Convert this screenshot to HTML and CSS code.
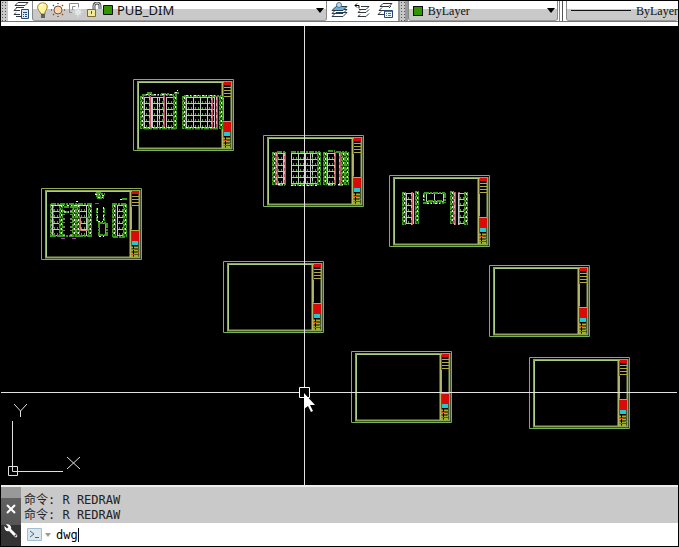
FILE: index.html
```html
<!DOCTYPE html>
<html lang="zh-CN">
<head>
  <meta charset="UTF-8" />
  <meta name="viewport" content="width=device-width, initial-scale=1" />
  <title>CAD</title>
  <link rel="stylesheet" href="styles.css">
</head>
<body>
  <div class="app">

    <!-- TOOLBAR -->
    <header class="toolbar">
      <span class="grip"></span>
      <button class="tool" aria-label="Layer properties">
        <svg width="18" height="18" viewBox="0 0 18 18" fill="none" stroke="#303840">
          <path d="M6 .5h10l-3 3H3zM4 5.500h8M2 8.500l3-3M2 8.500h6M4 10.500l-2 2h6M4 14.500h5" />
          <path d="M9.500 7.500h7v9h-7z" fill="#dce8f5" stroke="#234a7c" />
          <path d="M11 10.500h4M11 12.500h1m1 0h2M11 14.500h1m1 0h2" stroke="#234a7c" />
        </svg>
      </button>

      <div class="combo combo-layer">
        <svg width="80" height="18" viewBox="0 0 80 18" fill="none" aria-hidden="true">
          <!-- bulb -->
          <path d="M3 10C1 8 0 6 1 3.500 3 0 8 0 10 3c1 3-1 5-2 7v2H4z" fill="#fff4a0" stroke="#a47b24" />
          <path d="M4 13h4M4 15h4" stroke="#39424e" stroke-width="1.500" />
          <path d="M3.500 4l2-2" stroke="#fff" stroke-width="1.500" />
          <!-- sun -->
          <circle cx="21" cy="8" r="4" fill="#fbd9ae" stroke="#765741" />
          <path d="M21 1v1M21 14v1M14 8h1M27 8h1M16 3l1 1M25 12l1 1M26 3l-1 1M17 12l-1 1" stroke="#8b4e28" stroke-width="1.500" />
          <!-- viewport freeze -->
          <path d="M32.500 10V1.500h9v4M35.500 8V4.500h3M32 10.500h3" stroke="#8b9097" />
          <g stroke="#e2e3e6"><circle cx="41" cy="10" r="2.500" fill="#eee" /><path d="M41 5v10M36 10h10M38 7l6 6M44 7l-6 6" /></g>
          <!-- padlock -->
          <path d="M57 8V4c0-4 6-4 6 0v3" stroke="#4d565e" stroke-width="3" />
          <path d="M57 8V4c0-4 6-4 6 0v3" stroke="#e9e9df" />
          <path d="M50.500 7.500h8v7h-8z" fill="#f4e89b" stroke="#7b6b2c" />
          <path d="M54.500 9v3" stroke="#665a28" />
          <path d="M66.500 3.500h9v9h-9z" fill="#339600" stroke="#111" />
        </svg>
        <select class="layer-select" aria-label="Layer"><option>PUB_DIM</option></select>
        <svg class="arrow" width="8" height="5" viewBox="0 0 8 5"><path d="M0 0h8L4 5z" /></svg>
      </div>

      <div class="tools">
        <button class="tool" aria-label="Make object's layer current">
          <svg width="18" height="18" viewBox="0 0 18 18" fill="#b7ddf4" stroke="#263d50">
            <path d="M5 10.500h11l-4 4H1zM5 7.500h11l-4 4H1z" fill="#fff" />
            <path d="M5 4.500h11l-4 4H1z" fill="#66b2e1" />
            <circle cx="8" cy="3" r="2.500" stroke="#62788b" />
          </svg>
        </button>
        <button class="tool" aria-label="Previous layer">
          <svg width="18" height="18" viewBox="0 0 18 18" fill="none" stroke="#303840">
            <path d="M1 3.500h4v3M3 1.500l-2 2 2 2" stroke="#000" />
            <path d="M7 4.500h8l-3 3H5M6 8.500l-2 2h8l3-3M6 12.500l-2 2h8l3-3" />
          </svg>
        </button>
        <button class="tool" aria-label="Layer states">
          <svg width="18" height="18" viewBox="0 0 18 18" fill="none" stroke="#303840">
            <path d="M6 1.500h9l-3 3H3zM5 5.500l-3 3h6M12 6l2-2M4 9.500l-3 3h6" />
            <path d="M7.500 8.500h8v7h-8z" fill="#eef5fc" stroke="#234a7c" />
            <path d="M8 9.500h7M9 11.500h1m1 0h3M9 13.500h1m1 0h3" stroke="#4d77a4" />
          </svg>
        </button>
      </div>

      <span class="grip grip-mid"></span>
      <div class="combo combo-color">
        <span class="swatch"></span>
        <select aria-label="Color"><option>ByLayer</option></select>
        <svg class="arrow" width="8" height="5" viewBox="0 0 8 5"><path d="M0 0h8L4 5z" /></svg>
      </div>
      <span class="divider"></span>
      <div class="combo combo-linetype">
        <span class="line-sample"></span>
        <select aria-label="Linetype"><option>ByLayer</option></select>
      </div>
    </header>

    <!-- MODEL SPACE -->
    <main class="model">
      <svg class="drawing" role="img" aria-label="Model space">
        <defs>
          <!-- empty drawing sheet with title block -->
          <g id="sheet" fill="none">
            <path d="M.5.5h100v71H.5z" stroke="#93a851" />
            <path d="M1 71.500h99M100.500 1v70" stroke="#7bb054" />
            <path d="M5 3h93.500v66.500H5z" stroke="#8ba35b" stroke-width="2" />
            <path d="M5.500 3.500h84M5.500 4v65" stroke="#a9cf7f" />
            <path d="M89.500 3v66" stroke="#b5b766" stroke-width="2" />
            <path d="M91 3h7v3h-7zM91 43h7v10h-7z" fill="#d90b08" />
            <path d="M91 8.500h7M91 11.500h7M91 14.500h7M91 17.500h7M90 42.500h8" stroke="#b9ab40" />
            <path d="M90.500 19v22M98.500 19v22" stroke="#77c27b" />
            <path d="M91 53h6v4h-6z" fill="#24c7d3" />
            <path d="M90 59.500h8M90 62.500h8M90 65.500h8M90 68h8" stroke="#a3b02d" stroke-width="2" stroke-dasharray="2 1 4 1" />
            <path d="M91 61.500h3M91 66.500h2M96 64.500h2" stroke="#d84b19" />
          </g>

          <!-- one column of floor plans: green outline with dotted dimensions -->
          <g id="dims" fill="none">
            <path d="M2 0v33" stroke="#1c4d0c" stroke-width="4" />
            <path d="M.5 0v33M3.500 0v33" stroke="#45a024" stroke-dasharray="4 1" />
            <path d="M1.500 0v33" stroke="#4fb52c" stroke-dasharray="2 2" />
            <path d="M2.500 1v32" stroke="#f0fae6" stroke-dasharray="2 3 2 2" />
          </g>
          <g id="rooms" fill="none">
            <path d="M0 1.500h8M0 7.500h8M0 13.500h8M0 19.500h8M0 25.500h8M0 31.500h8" stroke="#c3c0cc" />
            <path d="M.5 1v31M7.500 1v31" stroke="#c9c9cf" />
            <path d="M2.500 5v27M5.500 5v27" stroke="#49a028" stroke-dasharray="2 4" />
          </g>
          <g id="stairs" fill="none">
            <path d="M1 0v33" stroke="#b75561" stroke-width="2" />
            <path d="M.5 1v32" stroke="#e9a9b0" stroke-dasharray="3 3" />
          </g>
        </defs>

        <!-- elevations -->
        <g transform="translate(132 53)">
          <use href="#sheet" x="1" />
          <use href="#dims" x="8" y="17" /><use href="#rooms" x="12" y="17" />
          <use href="#stairs" x="17" y="17" /><use href="#rooms" x="20" y="17" />
          <use href="#rooms" x="25" y="17" /><use href="#stairs" x="31" y="17" />
          <use href="#rooms" x="34" y="17" /><use href="#dims" x="41" y="17" />
          <use href="#dims" x="50" y="17" /><use href="#rooms" x="54" y="17" />
          <use href="#rooms" x="61" y="17" /><use href="#rooms" x="68" y="17" />
          <use href="#rooms" x="75" y="17" /><use href="#stairs" x="79" y="17" />
          <use href="#stairs" x="84" y="17" /><use href="#dims" x="87" y="17" />
          <path class="green" d="M10 16h35M52 17h37M12 49.500h33M54 49.500h33M15 14h5M29 15h8M42 14h6" />
          <path class="white" d="M12 48.500h31M54 48.500h32M43 13.500h3M45 11.500h1M14 15.500h28M54 16.500h30" />
        </g>

        <g transform="translate(263 109)">
          <use href="#sheet" />
          <use href="#dims" x="9" y="17" /><use href="#rooms" x="13" y="17" />
          <use href="#stairs" x="13" y="17" /><use href="#stairs" x="21" y="17" />
          <use href="#rooms" x="28" y="17" /><use href="#rooms" x="35" y="17" />
          <use href="#rooms" x="42" y="17" /><use href="#rooms" x="47" y="17" />
          <use href="#dims" x="54" y="17" />
          <use href="#dims" x="60" y="17" /><use href="#rooms" x="64" y="17" />
          <use href="#stairs" x="71" y="17" /><use href="#stairs" x="76" y="17" />
          <use href="#dims" x="78" y="17" /><use href="#dims" x="82" y="17" />
          <path class="green" d="M14 17h8M28 17h29M65 16h7M73 17h11M28 50h27M15 50h7M65 50h7M75 50h6" />
          <path class="white" d="M15 49.500h7M28 50.500h26M65 49.500h7M75 49.500h6" />
        </g>

        <g transform="translate(41 162)">
          <use href="#sheet" />
          <use href="#dims" x="9" y="16" /><use href="#rooms" x="11" y="16" />
          <use href="#dims" x="18" y="16" /><use href="#dims" x="31" y="16" />
          <use href="#rooms" x="38" y="16" /><use href="#dims" x="35" y="16" />
          <use href="#dims" x="47" y="16" />
          <use href="#dims" x="71" y="16" /><use href="#rooms" x="76" y="16" />
          <use href="#dims" x="82" y="16" />
          <path d="M39.500 29.500h7v13h-7zM58.500 35.500h6v12h-6z" fill="none" stroke="#cf8573" />
          <path class="green" d="M10 16h41M23 19h14M23 24h8M10 48h41M56 20v13M63 20v13M58 35v13M66 35v13M57 35h9M57 47h9M54 6h10M55 8h9M56 10h7M55 5h6M71 16h14M81 11h5M72 49h12" />
          <path class="white" d="M10 17.500h40M23 22v26M30 22v26M23 24h8M56.500 20v13M62.500 19v13M57 33.500h7M58 48.500h6M54 6.500h5M57 9.500h6M61 7.500h3M35 13.500h3M79 11.500h4" />
          <path d="M54 15.500h4M20 50.500h4M31 50.500h4M78 49.500h4" stroke="#a640ac" />
        </g>

        <g transform="translate(389 149)">
          <use href="#sheet" />
          <use href="#dims" x="13" y="17" /><use href="#rooms" x="17" y="17" />
          <use href="#stairs" x="22" y="17" /><use href="#dims" x="26" y="16" />
          <use href="#dims" x="61" y="16" /><use href="#stairs" x="65" y="17" />
          <use href="#stairs" x="69" y="17" /><use href="#rooms" x="69" y="17" />
          <use href="#dims" x="75" y="17" />
          <path d="M37.500 18.500h17v8h-17zM45.500 19v7" fill="none" stroke="#ccc" />
          <path class="green" d="M35 18h21M35 28h20M35 18v11M56 18v10M39 26h15" />
          <path class="white" d="M34.500 20v7M38 28.500h15" />
        </g>

        <!-- blank sheets -->
        <use href="#sheet" x="223" y="235" />
        <use href="#sheet" x="489" y="239" />
        <use href="#sheet" x="351" y="325" />
        <use href="#sheet" x="529" y="331" />

        <!-- crosshair -->
        <g fill="none" stroke="#e2e2e2">
          <path d="M304.500 0v361M304.500 372v2000M0 366.500h299M310 366.500h4000" />
          <path d="M299.500 361.500h10v10h-10z" stroke="#fff" />
        </g>
        <path d="M304 367v16l4-3 3 6 2-1-3-6h5z" fill="#fff" />

        <!-- UCS icon -->
        <g fill="none" stroke="#dedede">
          <path d="M12.500 395v50.500H63M8.500 440.500h9v9h-9z" />
          <path d="M14 378l6.500 7 6.500-7M20.500 385v6M67 431l13 12M80 431l-13 12" />
        </g>
      </svg>
    </main>

    <!-- COMMAND LINE -->
    <footer class="command">
      <div class="command-side">
        <button aria-label="Close">
          <svg width="10" height="10" viewBox="0 0 10 10"><path d="M1 1l8 8M9 1L1 9" stroke="#fff" stroke-width="2" /></svg>
        </button>
        <button aria-label="Customize">
          <svg width="14" height="14" viewBox="0 0 14 14">
            <path d="M2 .5C5-.5 8 2 7 5l6 6c1 2-1 3-2 2L5 7C2 8 0 5 .5 2L3 4.500 4.500 3z" fill="#fff" />
            <circle cx="11.500" cy="11.500" r="1" fill="#444" />
          </svg>
        </button>
      </div>
      <div class="command-main">
        <div class="history">
          <p>命令: R REDRAW</p>
          <p>命令: R REDRAW</p>
        </div>
        <div class="prompt">
          <button class="recent" aria-label="Recent commands">
            <svg width="24" height="14" viewBox="0 0 24 14" fill="none">
              <path d="M.5.5h14v12H.5z" fill="#dce6ed" stroke="#9fc0d2" />
              <path d="M3 3l4 3-4 3M8 9.500h4" stroke="#526475" />
              <path d="M18 5h6l-3 4z" fill="#999" />
            </svg>
          </button>
          <div class="entry">
            <input type="text" value="dwg" aria-label="Command" spellcheck="false" autocomplete="off" />
            <span class="caret"></span>
          </div>
        </div>
      </div>
    </footer>
  </div>
</body>
</html>
```
FILE: styles.css
```css
* {
  box-sizing: border-box;
}
html, body {
  height: 100%;
  margin: 0;
}

.app {
  display: flex;
  flex-direction: column;
  height: 100%;
  border: 1px solid #000;
  background: #fff;
  font-family: "Noto Sans", "Noto Sans CJK SC", sans-serif;
  overflow: hidden;
}

button {
  padding: 0;
  border: none;
  background: none;
}

svg {
  display: block;
  flex: none;
}

/* toolbar */
.toolbar {
  display: flex;
  flex: none;
  height: 21px;
  margin-bottom: 4px;
  border-bottom: 1px solid #777;
}

.grip {
  flex: none;
  width: 7px;
  background: radial-gradient(circle, #555 0 1px, transparent 1px) 0 0 / 3px 3px #c8c8c8;
}

.grip-mid {
  width: 10px;
  border: solid #999;
  border-width: 0 3px 0 2px;
}

.tool {
  flex: none;
  width: 24px;
  padding-left: 4px;
}

.tools {
  display: flex;
  flex: none;
  width: 71px;
}

.tools .tool {
  width: 23px;
}

.combo {
  display: flex;
  align-items: center;
  min-width: 0;
  border-left: 1px solid #888;
  border-right: 1px solid #888;
  border-bottom: 1px solid #999;
  border-radius: 0 0 3px 3px;
  background: linear-gradient(#fff 8px, #c9c9c9 8px);
}

.combo-layer {
  flex: 298 1 0;
  padding: 0 2px 0 4px;
}

.combo-color {
  flex: 148 1 0;
  gap: 5px;
  padding: 0 2px 0 4px;
}

.combo-linetype {
  flex: 111 1 0;
  gap: 5px;
  padding-left: 4px;
  border-right: none;
}

.combo select {
  flex: 1;
  min-width: 0;
  padding: 0;
  border: none;
  appearance: none;
  background: transparent;
  color: #111;
  font: 12px "Liberation Serif", serif;
}

.combo .layer-select {
  margin-bottom: 2px;
  font: 13px "Noto Sans", sans-serif;
}

.combo-linetype select {
  flex: none;
  width: 42px;
}

.swatch {
  flex: none;
  width: 10px;
  height: 10px;
  border: 1px solid #111;
  background: #339600;
}

.line-sample {
  flex: 1;
  height: 1px;
  background: #111;
}

.divider {
  flex: none;
  width: 8px;
  border: solid #fff;
  border-width: 0 1px;
  background: linear-gradient(90deg, #888 1px, #fff 1px, #fff 3px, #555 3px, #555 4px, #fff 4px);
}

/* model space */
.model {
  flex: 1;
  min-height: 0;
  background: #000;
}

.drawing {
  width: 100%;
  height: 100%;
  margin-left: -1px;
}

.green {
  fill: none;
  stroke: #3d9a20;
  stroke-width: 2;
  stroke-dasharray: 5 1 2 1;
}

.white {
  fill: none;
  stroke: #edf3e9;
  stroke-dasharray: 2 2 1 3;
}

/* command line */
.command {
  display: flex;
  flex: none;
  border-top: 2px solid #eee;
}

.command-side {
  display: flex;
  flex-direction: column;
  flex: none;
  gap: 10px;
  width: 20px;
  padding-top: 17px;
  background: linear-gradient(#999 11px, #626262 11px, #555 38px, #333 38px);
}

.command-side svg {
  margin: 0 auto;
}

.command-main {
  flex: 1;
  min-width: 0;
}

.history {
  padding: 6px 3px 0;
  background: #c9c9c9;
}

.history p {
  margin: 0;
  color: #222;
  font: 12px/15px "DejaVu Sans Mono", "Noto Sans CJK SC", monospace;
}

.prompt {
  display: flex;
  align-items: center;
  gap: 5px;
  height: 23px;
  padding-left: 6px;
}

.entry {
  position: relative;
  flex: 1;
}

.entry input {
  display: block;
  width: 100%;
  padding: 1px 0 0;
  border: none;
  outline: none;
  caret-color: transparent;
  font: 12px/16px "DejaVu Sans Mono", monospace;
}

/* text cursor after the typed command */
.caret {
  position: absolute;
  top: 2px;
  left: 22px;
  width: 1px;
  height: 14px;
  background: #000;
}
```
